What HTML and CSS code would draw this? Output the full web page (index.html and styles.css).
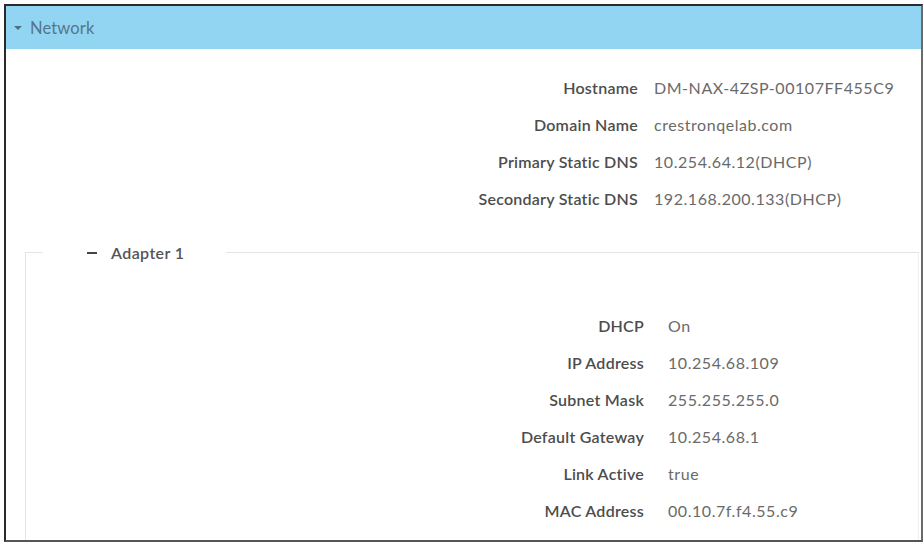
FILE: index.html
```html
<!DOCTYPE html>
<html>
<head>
<meta charset="utf-8">
<link rel="stylesheet" href="styles.css">
</head>
<body>
<div class="frame">
  <div class="header"><span class="caret"></span><span class="title">Network</span></div>
  <div class="content">
    <div class="rows top">
      <div class="row"><span class="label">Hostname</span><span class="value">DM-NAX-4ZSP-00107FF455C9</span></div>
      <div class="row"><span class="label">Domain Name</span><span class="value">crestronqelab.com</span></div>
      <div class="row"><span class="label">Primary Static DNS</span><span class="value">10.254.64.12(DHCP)</span></div>
      <div class="row"><span class="label">Secondary Static DNS</span><span class="value">192.168.200.133(DHCP)</span></div>
    </div>
    <fieldset class="adapter">
      <legend class="legend"><span class="dash"></span><span class="legend-text">Adapter 1</span></legend>
      <div class="rows inner">
        <div class="row"><span class="label">DHCP</span><span class="value">On</span></div>
        <div class="row"><span class="label">IP Address</span><span class="value">10.254.68.109</span></div>
        <div class="row"><span class="label">Subnet Mask</span><span class="value">255.255.255.0</span></div>
        <div class="row"><span class="label">Default Gateway</span><span class="value">10.254.68.1</span></div>
        <div class="row"><span class="label">Link Active</span><span class="value">true</span></div>
        <div class="row"><span class="label">MAC Address</span><span class="value">00.10.7f.f4.55.c9</span></div>
      </div>
    </fieldset>
  </div>
</div>
</body>
</html>
```
FILE: styles.css
```css
html, body {
  margin: 0;
  padding: 0;
  background: #ffffff;
}
body {
  font-family: Lato, "Open Sans", sans-serif;
  width: 923px;
  height: 542px;
  overflow: hidden;
}
.frame {
  margin: 4px 0 0 4px;
  width: 915px;
  height: 534px;
  border: 2px solid #2a2a2a;
  border-right-color: #6a6a6a;
  border-bottom-color: #555;
  overflow: hidden;
  background: #fff;
}
.header {
  height: 43px;
  background: #92d5f2;
  display: flex;
  align-items: center;
  padding-left: 8px;
}
.caret {
  width: 0;
  height: 0;
  border-left: 4px solid transparent;
  border-right: 4px solid transparent;
  border-top: 4px solid #4f6f84;
  margin-right: 8px;
  margin-top: 1px;
}
.title {
  font-size: 16.5px;
  color: #557589;
  letter-spacing: 0.15px;
}
.content {
  padding-top: 20px;
}
.rows {
  display: grid;
  row-gap: 0;
}
.row {
  display: grid;
  height: 37px;
  align-items: center;
}
.top .row {
  grid-template-columns: 632px 1fr;
  column-gap: 16px;
}
.inner .row {
  grid-template-columns: 618px 1fr;
  column-gap: 24px;
}
.label {
  text-align: right;
  color: #4d4d4d;
  font-weight: 600;
  font-size: 16px;
  letter-spacing: 0.25px;
}
.value {
  color: #6a6a6a;
  font-size: 16px;
  letter-spacing: 0.55px;
}
.adapter {
  margin: 26px 0 0 19px;
  width: 892px;
  border: 1px solid #e4e4e4;
  border-right-color: #f0f0f0;
  border-bottom: none;
  padding: 45px 0 40px 0;
  min-width: 0;
}
.legend {
  padding: 0 41px 0 44px;
  margin-left: 17px;
  display: flex;
  align-items: center;
}
.dash {
  display: inline-block;
  width: 10px;
  height: 2px;
  background: #444;
  margin-right: 14px;
}
.legend-text {
  font-size: 16px;
  font-weight: 600;
  color: #555;
  letter-spacing: 0.4px;
}
```
